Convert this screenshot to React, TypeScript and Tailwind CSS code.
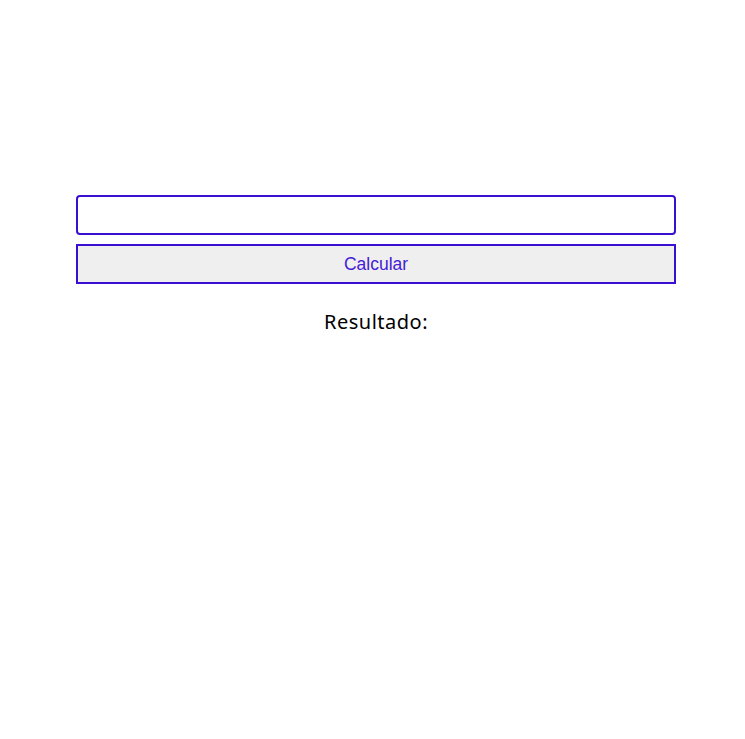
import React from 'react';

export default function App() {
  return (
    <div className="min-h-[739px] bg-white pt-[195px] pl-[7px] flex flex-col items-center">
      <div className="w-[600px] flex flex-col gap-[9px]">
        <input
          type="text"
          className="w-full h-[40px] border-2 border-[#3a0fcf] rounded-[4px] px-2 outline-none bg-white"
        />
        <button className="w-full h-[40px] border-2 border-[#3a0fcf] bg-[#efefef] text-[#4420d6] text-[17.5px] font-['Liberation_Sans',Arial,sans-serif]">
          Calcular
        </button>
      </div>
      <p className="mt-[24px] text-[20px] leading-[28px] tracking-[0.5px] text-black font-['Noto_Sans',sans-serif]">
        Resultado:
      </p>
    </div>
  );
}
